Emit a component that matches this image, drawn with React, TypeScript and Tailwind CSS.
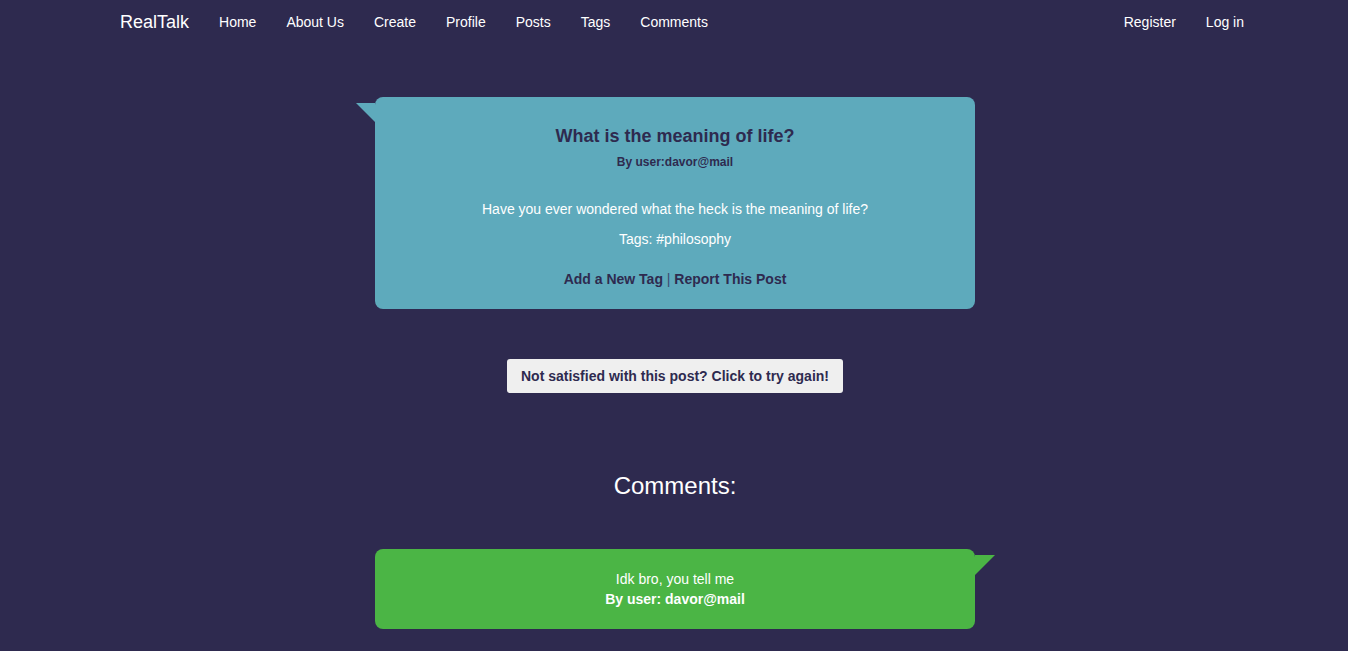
import React from 'react'

const navLinks = ['Home', 'About Us', 'Create', 'Profile', 'Posts', 'Tags', 'Comments']

const App: React.FC = () => {
    return (
        <div className="min-h-[651px] bg-[#2e2a4f] font-['Liberation_Sans',Arial,sans-serif] text-white">
            <nav className="h-[44px] flex items-center justify-between pl-[120px] pr-[89px]">
                <div className="flex items-center">
                    <a href="#" className="text-[18px] mr-[15px]">RealTalk</a>
                    {navLinks.map(link => (
                        <a key={link} href="#" className="text-[14px] px-[15px]">{link}</a>
                    ))}
                </div>
                <div className="flex items-center">
                    <a href="#" className="text-[14px] px-[15px]">Register</a>
                    <a href="#" className="text-[14px] px-[15px]">Log in</a>
                </div>
            </nav>

            <div className="flex flex-col items-center pl-[2px]">
                {/* post */}
                <div className="relative mt-[53px] w-[600px] bg-[#5eaabc] rounded-[8px] pt-[27px] pb-[19px] text-center">
                    <div className="absolute left-[-19px] top-[6px] w-0 h-0 border-t-[19px] border-t-[#5eaabc] border-l-[19px] border-l-transparent" />
                    <h2 className="text-[18px] font-bold text-[#2e2a4f] leading-[24px]">What is the meaning of life?</h2>
                    <p className="text-[12px] font-bold text-[#2e2a4f] mt-[5px]">By user:davor@mail</p>
                    <p className="text-[14px] mt-[28px]">Have you ever wondered what the heck is the meaning of life?</p>
                    <p className="text-[14px] mt-[9px]">Tags: #philosophy</p>
                    <p className="text-[14px] mt-[19px] text-[#2e2a4f]">
                        <a href="#" className="font-bold">Add a New Tag</a>
                        <span className="text-[#3a4a70]"> | </span>
                        <a href="#" className="font-bold">Report This Post</a>
                    </p>
                </div>

                <button className="mt-[50px] h-[34px] px-[14px] bg-[#efefef] rounded-[3px] text-[14px] font-bold text-[#2e2a4f]">
                    Not satisfied with this post? Click to try again!
                </button>

                <h3 className="mt-[77px] text-[24px] leading-[32px]">Comments:</h3>

                {/* comment */}
                <div className="relative mt-[47px] w-[600px] h-[80px] bg-[#4bb545] rounded-[8px] flex flex-col items-center justify-center text-[14px] leading-[20px]">
                    <div className="absolute right-[-20px] top-[6px] w-0 h-0 border-t-[20px] border-t-[#4bb545] border-r-[20px] border-r-transparent" />
                    <p>Idk bro, you tell me</p>
                    <p className="font-bold">By user: davor@mail</p>
                </div>
            </div>
        </div>
    )
}

export default App
